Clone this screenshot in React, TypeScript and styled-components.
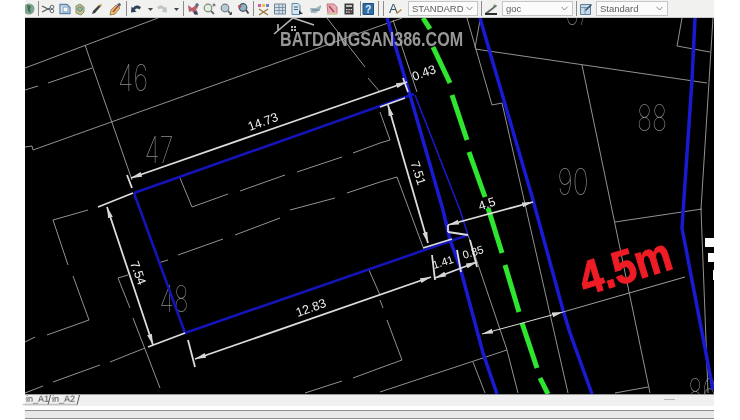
import React from 'react'
import styled, { createGlobalStyle } from 'styled-components'

type Seg = [number, number, number, number]

const THIN_LINES: Seg[] = [
    [25, 68, 158, 18], [85, 45, 132, 180], [25, 90, 38, 86], [48, 83, 92, 68],
    [33, 150, 402, 18], [25, 147, 32, 146], [32, 146, 33, 150],
    [327, 18, 365, 67], [368, 78, 380, 92],
    [180, 178, 192, 207], [192, 207, 228, 194], [240, 191, 285, 175], [297, 172, 342, 157], [353, 153, 380, 143],
    [290, 210, 335, 198], [347, 193, 380, 182],
    [178, 255, 223, 239], [235, 235, 280, 218], [158, 263, 168, 260],
    [53, 220, 88, 210], [53, 220, 68, 265], [73, 276, 89, 320], [89, 320, 47, 335], [25, 342, 35, 337],
    [118, 278, 130, 308], [118, 278, 128, 275], [133, 318, 160, 388],
    [110, 362, 145, 348], [53, 382, 100, 365], [25, 393, 43, 386],
    [353, 378, 380, 368], [305, 393, 342, 381], [369, 270, 380, 295],
    [467, 18, 492, 105], [492, 105, 502, 103], [502, 103, 568, 393], [480, 20, 475, 48],
    [475, 49, 707, 83], [582, 65, 650, 393],
    [682, 18, 677, 46], [677, 46, 710, 52], [713, 18, 701, 209], [701, 209, 708, 393], [615, 222, 702, 209],
    [393, 20, 417, 92], [380, 182, 397, 177], [397, 177, 423, 247], [380, 112, 390, 140], [380, 143, 390, 140],
    [468, 235, 507, 350], [507, 350, 380, 392], [473, 362, 485, 393], [507, 350, 518, 393],
    [387, 320, 402, 360], [402, 360, 380, 368], [380, 300, 383, 308], [615, 393, 648, 387],
]

const DIM_LINES: Seg[] = [
    [127, 175, 132, 188], [403, 78, 408, 92], [98, 207, 133, 193], [148, 347, 185, 333],
    [188, 340, 195, 367], [432, 255, 435, 280], [470, 240, 477, 267], [457, 250, 461, 272],
    [380, 107, 405, 98], [423, 248, 452, 239], [448, 225, 448, 232], [448, 232, 468, 235],
]

const ARROWS: Seg[] = [
    [131, 178, 407, 82], [107, 207, 153, 345], [195, 359, 431, 277], [388, 105, 428, 243],
    [448, 225, 533, 202], [435, 278, 477, 262],
]

const GREEN_DASHES: Seg[] = [
    [423, 18, 430, 29], [433, 47, 450, 83], [452, 95, 467, 140], [469, 152, 485, 197],
    [488, 208, 502, 253], [505, 265, 519, 312], [522, 323, 537, 368], [540, 378, 548, 394],
]

const PARCELS = [
    { text: '46', x: 133, y: 91, w: 30 },
    { text: '47', x: 159, y: 163, w: 29 },
    { text: '48', x: 174, y: 312, w: 29 },
    { text: '90', x: 573, y: 195, w: 31 },
    { text: '88', x: 652, y: 131, w: 30 },
    { text: '87', x: 578, y: 25, w: 24 },
    { text: '86', x: 702, y: 405, w: 28 },
]

const DIM_LABELS = [
    { text: '14.73', x: 263, y: 122, a: -20 },
    { text: '0.43', x: 424, y: 73, a: -20 },
    { text: '7.54', x: 138, y: 273, a: 70 },
    { text: '12.83', x: 311, y: 308, a: -20 },
    { text: '7.51', x: 418, y: 173, a: 72 },
    { text: '4.5', x: 487, y: 204, a: -18 },
    { text: '1.41', x: 443, y: 262, a: -18, small: true },
    { text: '0.85', x: 473, y: 252, a: -18, small: true },
]

const GlobalStyle = createGlobalStyle`
    html, body {
        margin: 0;
        background: #fff;
    }
`

const Page = styled.div`
    width: 740px;
    height: 420px;
    overflow: hidden;
    padding-left: 25px;
    padding-right: 26px;
    box-sizing: border-box;
    display: flex;
    flex-direction: column;
    font-family: "Liberation Sans", Arial, sans-serif;
`

const Toolbar = styled.div`
    height: 18px;
    flex: none;
    display: flex;
    align-items: center;
    overflow: hidden;
    background: #f1f1f0;
    border-bottom: 1px solid #c9c9c9;
    box-sizing: border-box;
`

const Icon = styled.svg<{ $gap: number; $w?: number }>`
    flex: none;
    width: ${p => p.$w ?? 14}px;
    height: 14px;
    margin-left: ${p => p.$gap}px;
    filter: blur(0.45px);
`

const Sep = styled.span<{ $gap: number }>`
    flex: none;
    width: 1px;
    height: 15px;
    margin-left: ${p => p.$gap}px;
    background: #8b8b8b;
`

const Select = styled.div<{ $gap: number; $w: number }>`
    flex: none;
    display: flex;
    align-items: center;
    justify-content: space-between;
    box-sizing: border-box;
    width: ${p => p.$w}px;
    height: 15px;
    margin-left: ${p => p.$gap}px;
    padding: 0 4px 0 3px;
    background: #fbfbfb;
    border: 1px solid #c2c6ca;
    font-size: 9.5px;
    color: #5d5d5d;
    filter: blur(0.3px);
`

const Chevron = styled.svg`
    width: 7px;
    height: 5px;
`

const Canvas = styled.div`
    position: relative;
    height: 376px;
    flex: none;
    background: #000;
    overflow: hidden;
`

const Drawing = styled.svg`
    display: block;
    width: 689px;
    height: 376px;
    filter: blur(0.35px);
`

const ParcelNo = styled.text`
    font-family: Inter, "Liberation Sans", sans-serif;
    font-weight: 100;
    font-size: 37px;
    fill: #8e8e8e;
    text-anchor: middle;
`

const DimLabel = styled.text<{ $small?: boolean }>`
    font-family: "Liberation Sans", Arial, sans-serif;
    font-size: ${p => (p.$small ? 11 : 12.5)}px;
    fill: #f2f2f2;
    text-anchor: middle;
    dominant-baseline: central;
`

const WidthLabel = styled.text`
    font-family: "Liberation Sans", Arial, sans-serif;
    font-weight: 700;
    font-size: 47px;
    fill: #ee1c25;
    stroke: #ee1c25;
    stroke-width: 1.2px;
    text-anchor: middle;
    dominant-baseline: central;
`

const Watermark = styled.div`
    position: absolute;
    left: 247px;
    top: -1px;
    display: flex;
    flex-direction: column;
    filter: blur(0.45px);
`

const HouseMark = styled.svg`
    width: 44px;
    height: 18px;
    margin-bottom: -5px;
`

const WatermarkText = styled.span`
    margin-left: 8px;
    font-size: 20px;
    line-height: 18px;
    font-weight: 700;
    color: rgba(172, 172, 172, 0.88);
    white-space: nowrap;
    transform: scaleX(0.805);
    transform-origin: left center;
`

const TabBar = styled.div`
    position: relative;
    height: 12px;
    flex: none;
    display: flex;
    align-items: flex-start;
    background: #f0f0f0;
    border-top: 1px solid #9b9b9b;
    box-sizing: border-box;
`

const Tab = styled.span<{ $w: number }>`
    flex: none;
    width: ${p => p.$w}px;
    height: 10px;
    box-sizing: border-box;
    padding-left: 1px;
    font-size: 9px;
    line-height: 9px;
    color: #444;
    border-bottom: 1px solid #a8a8a8;
    border-right: 1px solid #555;
    transform: skewX(-14deg);
    transform-origin: top left;
    filter: blur(0.25px);
`

const TabText = styled.span`
    display: block;
    transform: skewX(14deg);
    transform-origin: top left;
`

const ScrollDash = styled.span`
    position: absolute;
    right: 39px;
    top: 4px;
    width: 11px;
    height: 1px;
    background: #b5b5b5;
`

const StatusBar = styled.div`
    flex: none;
    box-sizing: border-box;
    background: #e9e9e9;
    margin-top: 3.5px;
    border-top: 1px solid #8f8f8f;
    border-bottom: 1px solid #8f8f8f;
    height: 9px;
`

const Glyph = ({ gap, w, children }: { gap: number; w?: number; children: React.ReactNode }) => (
    <Icon $gap={gap} $w={w} viewBox={`0 0 ${w ?? 14} 14`}>{children}</Icon>
)

const Drop = ({ gap }: { gap: number }) => (
    <Glyph gap={gap} w={5}><path d="M0 6h5L2.5 9z" fill="#444" /></Glyph>
)

const Combo = ({ gap, w, value }: { gap: number; w: number; value: string }) => (
    <Select $gap={gap} $w={w}>
        {value}
        <Chevron viewBox="0 0 7 5"><path d="M.5 .8L3.5 4 6.5 .8" fill="none" stroke="#888" /></Chevron>
    </Select>
)

const App = () => (
    <Page>
        <GlobalStyle />
        <Toolbar>
            <Glyph gap={-3}>
                <circle cx="7" cy="7" r="5.5" fill="#7fa38f" />
                <path d="M5 3l4 1-1 3 1 4-3-2z" fill="#3f6f52" />
            </Glyph>
            <Sep $gap={2} />
            <Glyph gap={2}>
                <path d="M1 4l8 4M1 10l8-4" stroke="#555" strokeWidth="1.2" />
                <circle cx="11" cy="5" r="1.8" fill="none" stroke="#667" />
                <circle cx="11" cy="9" r="1.8" fill="none" stroke="#667" />
            </Glyph>
            <Glyph gap={3}>
                <path d="M2 2.5h7l3 3v6H2z" fill="#d9e6f2" stroke="#5d86ad" strokeWidth="1.3" />
                <path d="M5 5h5v5H5z" fill="#f4f7fa" stroke="#7d9cbb" />
            </Glyph>
            <Glyph gap={1}>
                <path d="M3 4l4-2 4 3v5l-3 3-5-2z" fill="#c9c488" stroke="#7f8f70" />
                <circle cx="7" cy="7" r="2.3" fill="#8fc0a6" stroke="#6d7f78" />
            </Glyph>
            <Glyph gap={3}>
                <path d="M2 12l3-1 6-7-2-1-6 6z" fill="#3f3f3f" />
                <path d="M9 3l2-1 1 1-1 2z" fill="#c9a24e" />
            </Glyph>
            <Glyph gap={4}>
                <path d="M2 13l1-5 5-5 4 3-5 6z" fill="#e4c36a" stroke="#8b6d3d" strokeWidth=".8" />
                <path d="M5 10l5-6" stroke="#b0434b" strokeWidth="1.6" />
                <path d="M9 2l3-1 1 2-2 2z" fill="#5b5b6e" />
            </Glyph>
            <Sep $gap={4} />
            <Glyph gap={2}>
                <path d="M12 5C9 2.5 5.5 3 4 6L2.5 4.5 2 10.5l5.5-.7L5.7 8C7 6 9 6 10.5 7.5z" fill="#2f4358" />
            </Glyph>
            <Drop gap={5} />
            <Glyph gap={2}>
                <path d="M2 5c3-2.5 6.5-2 8 1l1.5-1.500L12 10.500l-5.500-.7L8.300 8C7 6 5 6 3.500 7.500z" fill="#bdc6c6" />
            </Glyph>
            <Drop gap={5} />
            <Sep $gap={4} />
            <Glyph gap={2}>
                <path d="M2 3l4 3 4-3 2 3-2 1 2 4-3 2-3-4-3 1z" fill="#b9606e" />
                <path d="M8 9l3 1 1 3-4-1z" fill="#2f4b62" />
                <path d="M9 3h4M11 1v4" stroke="#3b5368" strokeWidth="1.2" />
            </Glyph>
            <Glyph gap={2}>
                <circle cx="6" cy="6" r="3.8" fill="#e2ecdf" stroke="#7a8a78" strokeWidth="1.2" />
                <path d="M9 9l3 3" stroke="#6a6a6a" strokeWidth="1.8" />
                <path d="M10.500 3h3M12 1.500v3" stroke="#555" />
            </Glyph>
            <Glyph gap={3}>
                <circle cx="6" cy="6" r="3.8" fill="#b9c9d4" stroke="#6f8290" strokeWidth="1.2" />
                <path d="M9 9l2 2" stroke="#566" strokeWidth="1.8" />
                <path d="M10 13l3-.5-.5-3z" fill="#222" />
            </Glyph>
            <Glyph gap={3}>
                <circle cx="7" cy="5.5" r="3.8" fill="#8fb3c4" stroke="#41586a" strokeWidth="1.2" />
                <path d="M3 7l-1-4 4 1z" fill="#b44a57" />
                <path d="M10 8l2.5 3.5" stroke="#444" strokeWidth="1.8" />
            </Glyph>
            <Sep $gap={3} />
            <Glyph gap={3}>
                <path d="M1 2h3v3H1z" fill="#d85c9c" />
                <path d="M5 2h3v3H5z" fill="#e8c74a" />
                <path d="M9 2h3v3H9z" fill="#6b7fd0" />
                <path d="M2 7l9 6M11 7l-9 6" stroke="#9a7d45" strokeWidth="1.5" />
            </Glyph>
            <Glyph gap={2}>
                <path d="M1.5 2h11v10h-11z" fill="#d5dfe8" stroke="#6e8599" />
                <path d="M1.5 5.5h11M1.5 8.5h11M6 2v10M9.5 2v10" stroke="#6e8599" strokeWidth=".8" />
            </Glyph>
            <Glyph gap={3}>
                <path d="M2 1.5h6l2 2v9H2z" fill="#d8e6f0" stroke="#5f88a8" />
                <path d="M4 5h4M4 7.5h4" stroke="#3d5d78" />
                <path d="M9 8l4 4h-4z" fill="#2f3f4f" />
            </Glyph>
            <Glyph gap={5}>
                <path d="M1 6h6l5-3v3l-5 5H2z" fill="#9fb6bf" />
                <path d="M3 8h8" stroke="#5e7a86" />
            </Glyph>
            <Glyph gap={2}>
                <path d="M2 2h7l3 3v7H3z" fill="#e6aeb5" stroke="#c7737e" />
                <path d="M4 4l5 6" stroke="#b0475a" strokeWidth="1.5" />
                <path d="M2 11h10v2H2z" fill="#cfc9a8" />
            </Glyph>
            <Glyph gap={3}>
                <path d="M2.5 1.5h9v11h-9z" fill="#3a3a3a" />
                <path d="M4 3h6v2H4z" fill="#b9c0b8" />
                <path d="M4 7h1.5v1.2H4zM6.3 7h1.5v1.2H6.3zM8.6 7h1.5v1.2H8.6zM4 9.5h1.5v1.2H4zM6.3 9.5h1.5v1.2H6.3z" fill="#ddd" />
                <path d="M8.6 9.5h1.5v1.2H8.6z" fill="#c9524c" />
            </Glyph>
            <Sep $gap={4} />
            <Glyph gap={0}>
                <path d="M2 1.5h10.500v11H2z" fill="#2f6ea8" stroke="#1f4f7e" />
                <text x="7.25" y="11" fontFamily="Liberation Sans" fontWeight="700" fontSize="10" fill="#eaf2fa" textAnchor="middle">?</text>
            </Glyph>
            <Sep $gap={3} />
            <Sep $gap={4} />
            <Glyph gap={5}>
                <text x="0" y="11" fontFamily="Liberation Sans" fontSize="13" fill="#37506a">A</text>
                <path d="M7 11l5-4 1 1-5 4z" fill="#b98a4a" />
            </Glyph>
            <Combo gap={5} w={70} value="STANDARD" />
            <Sep $gap={3} />
            <Glyph gap={2}>
                <path d="M1 11L12 3l1 1L3 12z" fill="#55606a" />
                <path d="M1 12h12" stroke="#2d2d2d" strokeWidth="2" />
                <path d="M8 5l3-3 1 2z" fill="#7a9a52" />
            </Glyph>
            <Combo gap={4} w={71} value="goc" />
            <Sep $gap={3} />
            <Glyph gap={2}>
                <path d="M1.5 2.5h10v10h-10z" fill="#c5d9ea" stroke="#5f8099" />
                <path d="M1.5 5.5h10M6 5.5v7" stroke="#6a8aa4" strokeWidth=".8" />
                <path d="M6 8l6-6 1 1-6 6z" fill="#34506b" />
            </Glyph>
            <Combo gap={3} w={72} value="Standard" />
        </Toolbar>
        <Canvas>
            <Drawing viewBox="25 18 689 376">
                <defs>
                    <marker id="arrow" markerUnits="userSpaceOnUse" markerWidth="11" markerHeight="6" refX="11" refY="3" orient="auto-start-reverse">
                        <path d="M11 3L0 .5V5.5z" fill="#d6d6d6" />
                    </marker>
                </defs>
                <g stroke="#a3a3a3" strokeWidth="0.9" fill="none">
                    {THIN_LINES.map(([x1, y1, x2, y2]) => (
                        <line key={`${x1}-${y1}-${x2}`} x1={x1} y1={y1} x2={x2} y2={y2} />
                    ))}
                </g>
                {PARCELS.map(({ text, x, y, w }) => (
                    <ParcelNo key={text} x={x} y={y} textLength={w} lengthAdjust="spacingAndGlyphs">{text}</ParcelNo>
                ))}
                <g stroke="#2fe52f" strokeWidth="5" fill="none">
                    {GREEN_DASHES.map(([x1, y1, x2, y2]) => (
                        <line key={x1} x1={x1} y1={y1} x2={x2} y2={y2} />
                    ))}
                </g>
                <g fill="none" stroke="#1a1ad2" strokeLinejoin="round">
                    <path d="M134 193L414 94M134 193L185 333L468 235" strokeWidth="2.6" stroke="#1414b8" />
                    <path d="M387 18L410 95L443 210L450 240L460 267L483 353L497 394" strokeWidth="3.5" />
                    <path d="M480 18L533 200L563 310L570 333L592 394" strokeWidth="3.5" />
                    <path d="M695 18L692 80L682 228L713 390" strokeWidth="3.5" />
                    <path d="M415 95L460 210L468 235" strokeWidth="1.5" />
                </g>
                <g stroke="#dcdcdc" strokeWidth="1.8" fill="none">
                    {DIM_LINES.map(([x1, y1, x2, y2]) => (
                        <line key={`${x1}-${y1}`} x1={x1} y1={y1} x2={x2} y2={y2} />
                    ))}
                    {ARROWS.map(([x1, y1, x2, y2]) => (
                        <line key={`${x1}-${y1}`} x1={x1} y1={y1} x2={x2} y2={y2} markerStart="url(#arrow)" markerEnd="url(#arrow)" />
                    ))}
                    <line x1="482" y1="334" x2="563" y2="312" strokeWidth="1" markerStart="url(#arrow)" markerEnd="url(#arrow)" />
                    <line x1="563" y1="312" x2="685" y2="277" stroke="#b0b0b0" strokeWidth="0.9" />
                </g>
                {DIM_LABELS.map(({ text, x, y, a, small }) => (
                    <DimLabel key={text} x={x} y={y} $small={small} transform={`rotate(${a} ${x} ${y})`}>{text}</DimLabel>
                ))}
                <WidthLabel x="625" y="266" textLength="94" lengthAdjust="spacingAndGlyphs" transform="rotate(-17 625 266)">4.5m</WidthLabel>
                <path d="M705 238h9v9h-9zM708 253h6v9h-6zM713 270h1v10h-1z" fill="#fff" />
            </Drawing>
            <Watermark>
                <HouseMark viewBox="0 0 44 18">
                    <path d="M2 17L21 1l21 7M6 7v6" fill="none" stroke="#b5b5b5" strokeWidth="1.6" />
                    <path d="M19 9h2v2h-2zM22 9h2v2h-2zM19 12h2v2h-2zM22 12h2v2h-2z" fill="#b5b5b5" />
                </HouseMark>
                <WatermarkText>BATDONGSAN386.COM</WatermarkText>
            </Watermark>
        </Canvas>
        <TabBar>
            <Tab $w={26}><TabText>in_A1</TabText></Tab>
            <Tab $w={29}><TabText>in_A2</TabText></Tab>
            <ScrollDash />
        </TabBar>
        <StatusBar />
    </Page>
)

export default App
